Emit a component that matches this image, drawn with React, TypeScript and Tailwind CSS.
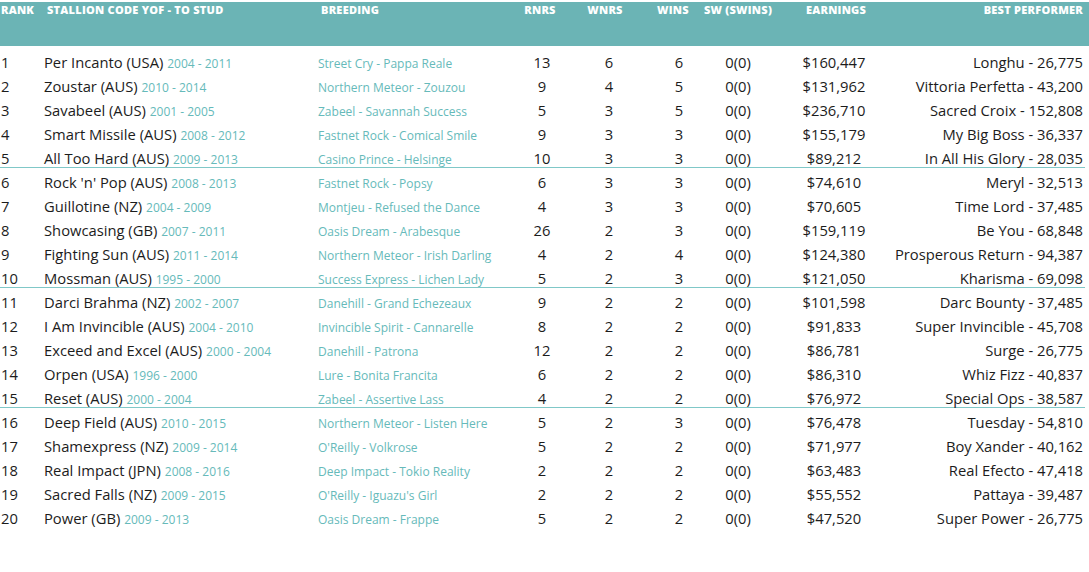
const rows = [
  ['1', 'Per Incanto (USA)', '2004 - 2011', 'Street Cry - Pappa Reale', '13', '6', '6', '0(0)', '$160,447', 'Longhu - 26,775'],
  ['2', 'Zoustar (AUS)', '2010 - 2014', 'Northern Meteor - Zouzou', '9', '4', '5', '0(0)', '$131,962', 'Vittoria Perfetta - 43,200'],
  ['3', 'Savabeel (AUS)', '2001 - 2005', 'Zabeel - Savannah Success', '5', '3', '5', '0(0)', '$236,710', 'Sacred Croix - 152,808'],
  ['4', 'Smart Missile (AUS)', '2008 - 2012', 'Fastnet Rock - Comical Smile', '9', '3', '3', '0(0)', '$155,179', 'My Big Boss - 36,337'],
  ['5', 'All Too Hard (AUS)', '2009 - 2013', 'Casino Prince - Helsinge', '10', '3', '3', '0(0)', '$89,212', 'In All His Glory - 28,035'],
  ['6', "Rock 'n' Pop (AUS)", '2008 - 2013', 'Fastnet Rock - Popsy', '6', '3', '3', '0(0)', '$74,610', 'Meryl - 32,513'],
  ['7', 'Guillotine (NZ)', '2004 - 2009', 'Montjeu - Refused the Dance', '4', '3', '3', '0(0)', '$70,605', 'Time Lord - 37,485'],
  ['8', 'Showcasing (GB)', '2007 - 2011', 'Oasis Dream - Arabesque', '26', '2', '3', '0(0)', '$159,119', 'Be You - 68,848'],
  ['9', 'Fighting Sun (AUS)', '2011 - 2014', 'Northern Meteor - Irish Darling', '4', '2', '4', '0(0)', '$124,380', 'Prosperous Return - 94,387'],
  ['10', 'Mossman (AUS)', '1995 - 2000', 'Success Express - Lichen Lady', '5', '2', '3', '0(0)', '$121,050', 'Kharisma - 69,098'],
  ['11', 'Darci Brahma (NZ)', '2002 - 2007', 'Danehill - Grand Echezeaux', '9', '2', '2', '0(0)', '$101,598', 'Darc Bounty - 37,485'],
  ['12', 'I Am Invincible (AUS)', '2004 - 2010', 'Invincible Spirit - Cannarelle', '8', '2', '2', '0(0)', '$91,833', 'Super Invincible - 45,708'],
  ['13', 'Exceed and Excel (AUS)', '2000 - 2004', 'Danehill - Patrona', '12', '2', '2', '0(0)', '$86,781', 'Surge - 26,775'],
  ['14', 'Orpen (USA)', '1996 - 2000', 'Lure - Bonita Francita', '6', '2', '2', '0(0)', '$86,310', 'Whiz Fizz - 40,837'],
  ['15', 'Reset (AUS)', '2000 - 2004', 'Zabeel - Assertive Lass', '4', '2', '2', '0(0)', '$76,972', 'Special Ops - 38,587'],
  ['16', 'Deep Field (AUS)', '2010 - 2015', 'Northern Meteor - Listen Here', '5', '2', '3', '0(0)', '$76,478', 'Tuesday - 54,810'],
  ['17', 'Shamexpress (NZ)', '2009 - 2014', "O'Reilly - Volkrose", '5', '2', '2', '0(0)', '$71,977', 'Boy Xander - 40,162'],
  ['18', 'Real Impact (JPN)', '2008 - 2016', 'Deep Impact - Tokio Reality', '2', '2', '2', '0(0)', '$63,483', 'Real Efecto - 47,418'],
  ['19', 'Sacred Falls (NZ)', '2009 - 2015', "O'Reilly - Iguazu's Girl", '2', '2', '2', '0(0)', '$55,552', 'Pattaya - 39,487'],
  ['20', 'Power (GB)', '2009 - 2013', 'Oasis Dream - Frappe', '5', '2', '2', '0(0)', '$47,520', 'Super Power - 26,775'],
];

// rank | stallion | breeding | rnrs | wnrs | wins | sw | earnings | best
const cols = 'grid grid-cols-[44px_274px_192px_64px_70px_70px_48px_144px_178px]';

export default function App() {
  return (
    <div className="w-[1089px] h-[572px] bg-white pt-[2px] overflow-hidden" style={{ fontFamily: '"Open Sans", Lato, sans-serif' }}>
      <div className={`${cols} h-[44px] bg-[#6bb4b5] text-white text-[11px] tracking-[0.25px] font-extrabold leading-[13px] pt-[1px] whitespace-nowrap`}>
        <div className="pl-[1px]">RANK</div>
        <div className="pl-[3px]">STALLION CODE YOF - TO STUD</div>
        <div className="pl-[3px]">BREEDING</div>
        <div className="flex justify-center pr-[4px]">RNRS</div>
        <div className="flex justify-center pr-[8px]">WNRS</div>
        <div className="flex justify-center pr-[12px]">WINS</div>
        <div className="flex justify-center">SW (SWINS)</div>
        <div className="flex justify-center pl-[4px]">EARNINGS</div>
        <div className="flex justify-end pr-[1px]">BEST PERFORMER</div>
      </div>
      <div className="pt-[2px]">
        {rows.map((r, i) => (
          <div
            key={i}
            className={`${cols} h-[24px] pt-[6px] items-baseline text-[14.75px] leading-[16px] text-[#1c1c1c] whitespace-nowrap ${
              i === 4 || i === 9 || i === 14 ? 'border-b border-[#80c8c8] w-[1085px]' : ''
            }`}
          >
            <div className="pl-[1px]">{r[0]}</div>
            <div>
              {r[1]} <span className="text-[12px] text-[#66baba]">{r[2]}</span>
            </div>
            <div className="text-[12px] text-[#66baba]">{r[3]}</div>
            <div className="text-center">{r[4]}</div>
            <div className="text-center">{r[5]}</div>
            <div className="text-center">{r[6]}</div>
            <div className="text-center">{r[7]}</div>
            <div className="text-center">{r[8]}</div>
            <div className="flex justify-end pr-[1px]">{r[9]}</div>
          </div>
        ))}
      </div>
    </div>
  );
}
